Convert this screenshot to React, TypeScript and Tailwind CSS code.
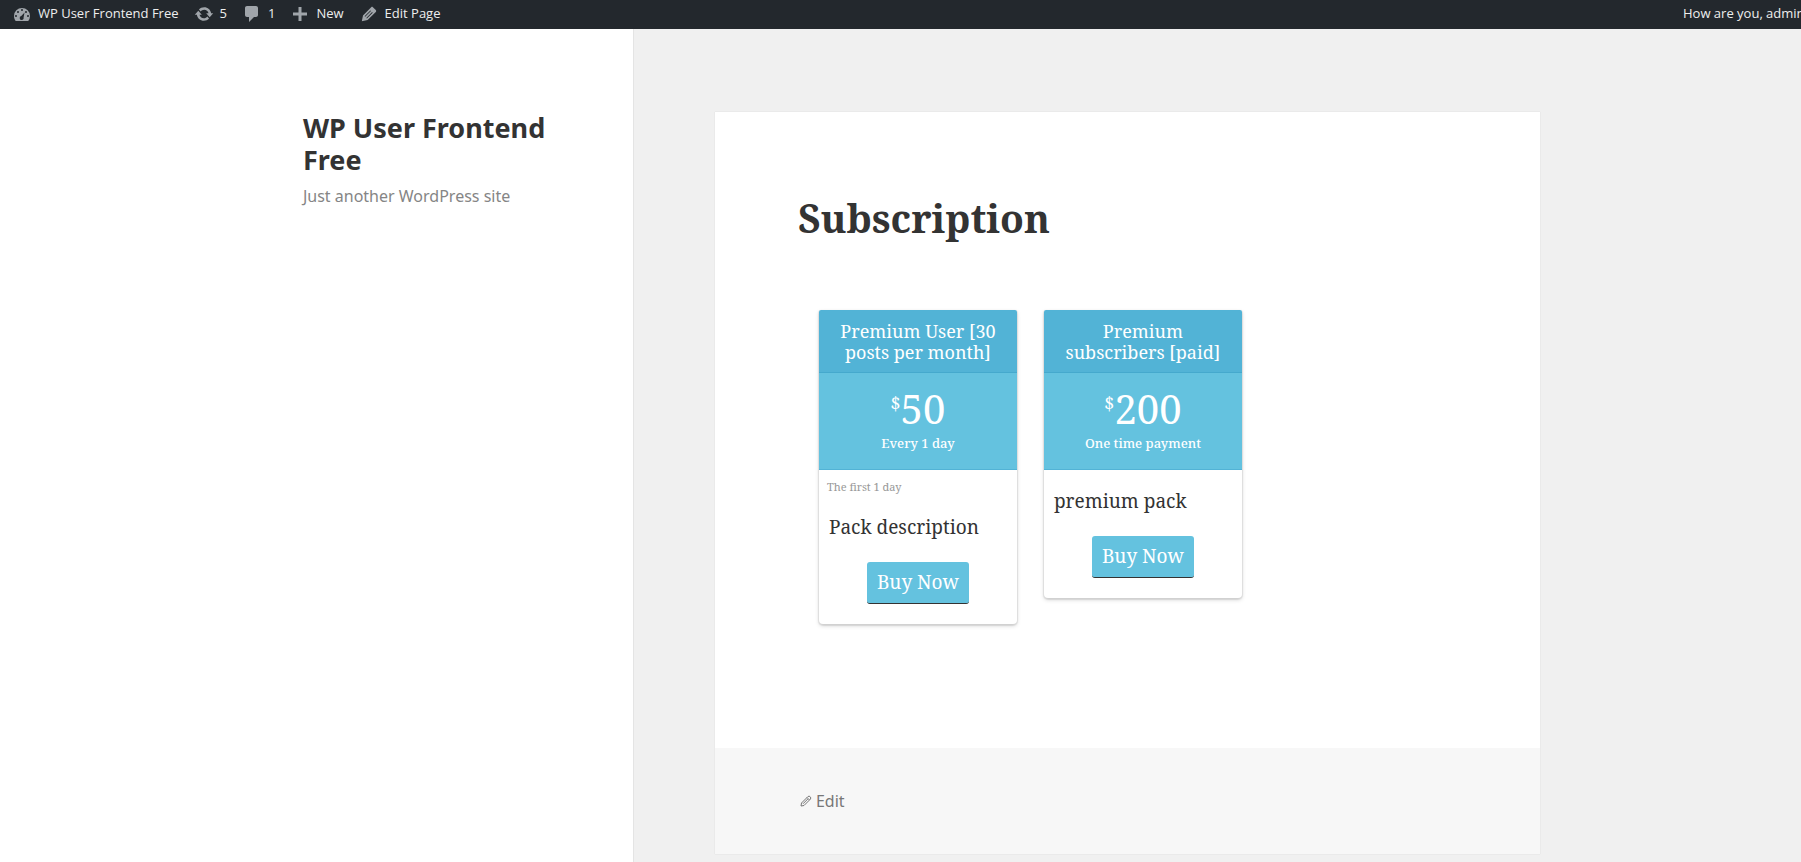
import { useState } from "react";
import type { ReactNode } from "react";

type Pack = {
  id: number;
  name: string;
  amount: number;
  billing: string;
  trial?: string;
  description: string;
};

const packs: Pack[] = [
  {
    id: 1,
    name: "Premium User [30 posts per month]",
    amount: 50,
    billing: "Every 1 day",
    trial: "The first 1 day",
    description: "Pack description",
  },
  {
    id: 2,
    name: "Premium subscribers [paid]",
    amount: 200,
    billing: "One time payment",
    description: "premium pack",
  },
];

const icons = {
  comment: "M5 2h9c1.1 0 2 .9 2 2v7c0 1.1-.9 2-2 2h-2l-5 5v-5H5c-1.1 0-2-.9-2-2V4c0-1.1.9-2 2-2z",
  plus: "M17 8.5v3h-5.5V17h-3v-5.5H3v-3h5.5V3h3v5.5z",
  update:
    "M10.2 3.28c3.53 0 6.43 2.61 6.92 6h2.08l-3.5 4-3.5-4h2.32c-.45-1.97-2.21-3.45-4.32-3.45-1.45 0-2.73.71-3.54 1.78L4.95 5.56c1.28-1.4 3.16-2.28 5.25-2.28zM9.8 16.72c-3.52 0-6.43-2.61-6.92-6H.8l3.5-4 3.5 4H5.47c.46 1.97 2.22 3.45 4.33 3.45 1.45 0 2.73-.71 3.54-1.78l1.71 2.05c-1.28 1.4-3.16 2.28-5.25 2.28z",
  edit: "M13.9 3.2l2.9 2.9c.5.5.5 1.300 0 1.800l-8.200 8.200-5.800 1.200 1.200-5.800 8.200-8.300c.5-.5 1.200-.5 1.700 0zM11.400 6.400l-5.800 5.800.6.6 5.800-5.800zM13.100 8.100l-5.800 5.800.6.6 5.800-5.800z",
  dashboard:
    "M3.76 17h12.48A8 8 0 0 0 18 12a8 8 0 1 0-16 0c0 1.89.66 3.63 1.76 5zM10 5a1 1 0 1 1 0 2 1 1 0 0 1 0-2zM6 7a1 1 0 1 1 0 2 1 1 0 0 1 0-2zm8 0a1 1 0 1 1 0 2 1 1 0 0 1 0-2zm-1.5 1.5l-.9 5A2 2 0 1 1 9.3 12.1zM4 11a1 1 0 1 1 0 2 1 1 0 0 1 0-2zm12 0a1 1 0 1 1 0 2 1 1 0 0 1 0-2z",
};

function Icon({ name }: { name: keyof typeof icons }) {
  return (
    <svg viewBox="0 0 20 20" className="size-5 shrink-0 fill-[#a0a5aa]" fillRule="evenodd" aria-hidden="true">
      <path d={icons[name]} />
    </svg>
  );
}

function BarLink({ icon, children }: { icon: keyof typeof icons; children: ReactNode }) {
  return (
    <a href="#" className="flex items-center gap-1.5 hover:text-[#00b9eb]">
      <Icon name={icon} />
      {children}
    </a>
  );
}

function AdminBar() {
  return (
    <header className="flex h-[29px] justify-between bg-[#23282d] pb-0.5 pl-3 font-['Open_Sans',sans-serif] text-[13px] text-[#eeeeee]">
      <nav className="flex items-center gap-[15px]" aria-label="Toolbar">
        <BarLink icon="dashboard">WP User Frontend Free</BarLink>
        <BarLink icon="update">5</BarLink>
        <BarLink icon="comment">1</BarLink>
        <BarLink icon="plus">New</BarLink>
        <BarLink icon="edit">Edit Page</BarLink>
      </nav>
      <a href="#" className="flex w-[118px] items-center overflow-hidden whitespace-nowrap">
        How are you, admin
      </a>
    </header>
  );
}

function PackCard({ pack, onBuy }: { pack: Pack; onBuy: (id: number) => void }) {
  return (
    <li className="w-[198px] overflow-hidden rounded-t-xs rounded-b bg-white shadow-[0_1px_1px_1px_rgba(0,0,0,0.08),0_2px_4px_rgba(0,0,0,0.15)]">
      <h3 className="border-b border-[#45a9cd] bg-[#52b3d6] px-4 pt-[11px] pb-[9px] text-center text-lg leading-[21px] text-white">
        {pack.name}
      </h3>
      <div className="border-b border-[#52b3d6] bg-[#64c2df] pt-3 pb-4 text-center text-white">
        <div className="flex justify-center text-[40px] leading-[48px]">
          <sup className="top-0 mt-1.5 text-lg leading-6">$</sup>
          {pack.amount}
        </div>
        <div className="text-[13px] leading-5 font-medium">{pack.billing}</div>
      </div>
      {pack.trial && <div className="px-2 pt-2 text-[11px] leading-[18px] text-[#999999]">{pack.trial}</div>}
      <p className="px-2.5 pt-4 text-[19px] leading-[30px]">{pack.description}</p>
      <div className="pt-5 pb-5 text-center">
        <button
          type="button"
          onClick={() => onBuy(pack.id)}
          className="h-[42px] rounded-[3px] border-b border-[#333333] bg-[#64c2df] px-2.5 text-[19px] text-white"
        >
          Buy Now
        </button>
      </div>
    </li>
  );
}

export default function App() {
  const [, setSelected] = useState<number | null>(null);

  return (
    <div className="flex min-h-screen flex-col bg-[#f0f0f0] text-[#333333]">
      <AdminBar />
      <div className="flex flex-1">
        <aside className="flex w-[35.2%] shrink-0 justify-end border-r border-[#e4e4e4] bg-white pt-[83px] pr-[81px] font-['Noto_Sans',sans-serif]">
          <div className="w-[249px]">
            <h1 className="text-[27px] leading-8 font-bold">
              <a href="#">WP User Frontend Free</a>
            </h1>
            <p className="mt-2 text-base leading-6 text-[#858585]">Just another WordPress site</p>
          </div>
        </aside>
        <main className="w-full max-w-[987px] px-[81px] pt-[83px] pb-1.5">
          <article className="bg-white font-['Noto_Serif','DejaVu_Serif',serif] shadow-[0_0_1px_rgba(0,0,0,0.15)]">
            <div className="px-[83px] pt-[82px] pb-[124px]">
              <h2 className="text-[39px] leading-[48px] font-bold">Subscription</h2>
              <ul className="mt-[68px] ml-[21px] flex flex-wrap items-start gap-[27px]">
                {packs.map((pack) => (
                  <PackCard key={pack.id} pack={pack} onBuy={setSelected} />
                ))}
              </ul>
            </div>
            <footer className="bg-[#f7f7f7] px-[85px] py-[41px] font-['Noto_Sans',sans-serif] text-base leading-6 text-[#777777]">
              <a href="#" className="flex w-fit items-center gap-1">
                <svg viewBox="0 0 12 12" className="size-3 fill-none stroke-current" strokeLinejoin="round" aria-hidden="true">
                  <path d="M1 11l.5-3 6.500-6.500q1.200-.8 2.200.3t.3 2.200L4 10.500zM7 2.500L9.500 5M3 8.800l4.800-4.800" />
                </svg>
                Edit
              </a>
            </footer>
          </article>
        </main>
      </div>
    </div>
  );
}
